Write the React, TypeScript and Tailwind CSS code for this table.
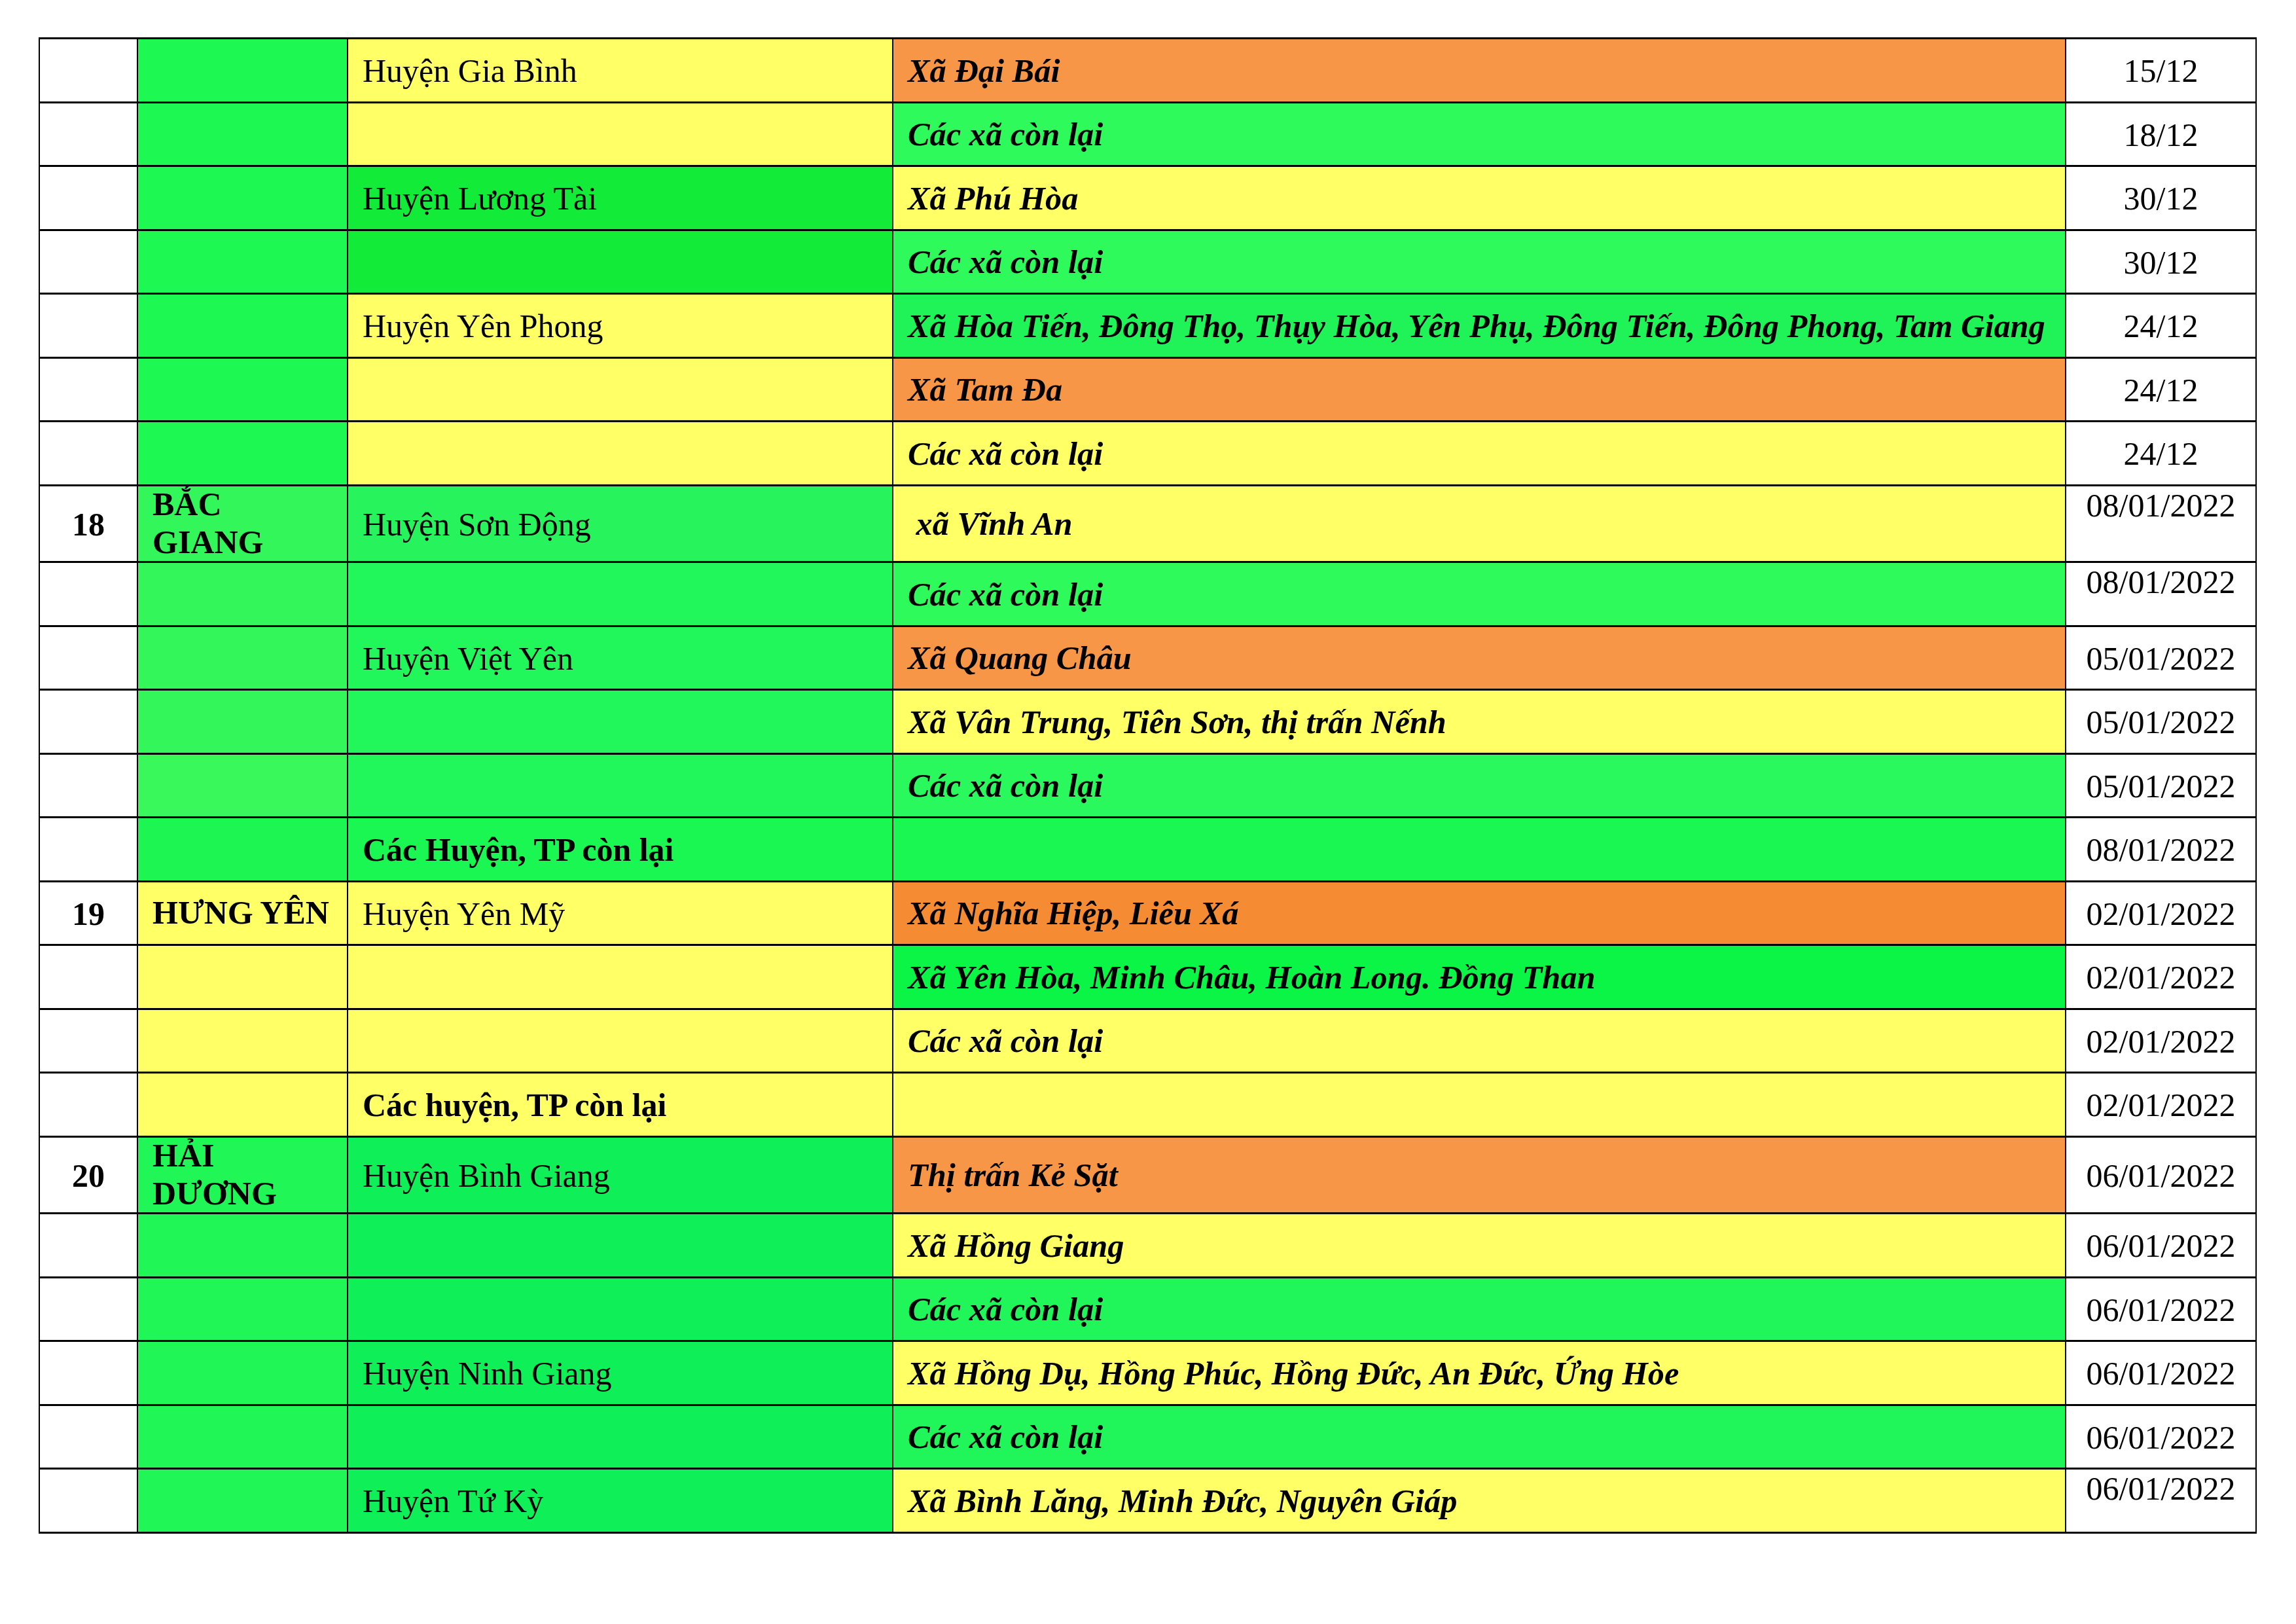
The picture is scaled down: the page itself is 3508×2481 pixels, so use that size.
import React from "react";

type Row = {
  num?: string;
  prov?: React.ReactNode;
  dist?: string;
  distBold?: boolean;
  commune?: string;
  date: string;
  c2: string;
  c3: string;
  c4: string;
  dateTop?: boolean;
  tall?: boolean;
};

const Y = "bg-[#FFFF66]";
const O = "bg-[#F79646]";
const G2a = "bg-[#1DF852]";
const G2b = "bg-[#33F75A]";
const G2d = "bg-[#20F757]";
const G3d = "bg-[#12EC39]";
const G3b = "bg-[#21F75A]";
const G3e = "bg-[#0EEF58]";
const G4a = "bg-[#2FFA5B]";
const G4e = "bg-[#20F55A]";

const rows: Row[] = [
  { dist: "Huyện Gia Bình", commune: "Xã Đại Bái", date: "15/12", c2: G2a, c3: Y, c4: O },
  { commune: "Các xã còn lại", date: "18/12", c2: G2a, c3: Y, c4: G4a },
  { dist: "Huyện Lương Tài", commune: "Xã Phú Hòa", date: "30/12", c2: G2a, c3: G3d, c4: Y },
  { commune: "Các xã còn lại", date: "30/12", c2: G2a, c3: G3d, c4: G4a },
  {
    dist: "Huyện Yên Phong",
    commune: "Xã Hòa Tiến, Đông Thọ, Thụy Hòa, Yên Phụ, Đông Tiến, Đông Phong, Tam Giang",
    date: "24/12",
    c2: G2a,
    c3: Y,
    c4: "bg-[#1FF358]",
  },
  { commune: "Xã Tam Đa", date: "24/12", c2: G2a, c3: Y, c4: O },
  { commune: "Các xã còn lại", date: "24/12", c2: G2a, c3: Y, c4: Y },
  {
    num: "18",
    prov: (
      <>
        BẮC
        <br />
        GIANG
      </>
    ),
    dist: "Huyện Sơn Động",
    commune: " xã Vĩnh An",
    date: "08/01/2022",
    c2: G2b,
    c3: "bg-[#27F35C]",
    c4: Y,
    dateTop: true,
    tall: true,
  },
  { commune: "Các xã còn lại", date: "08/01/2022", c2: G2b, c3: G3b, c4: G4a, dateTop: true },
  { dist: "Huyện Việt Yên", commune: "Xã Quang Châu", date: "05/01/2022", c2: G2b, c3: G3b, c4: O },
  { commune: "Xã Vân Trung, Tiên Sơn, thị trấn Nếnh", date: "05/01/2022", c2: G2b, c3: G3b, c4: Y },
  { commune: "Các xã còn lại", date: "05/01/2022", c2: "bg-[#38F85C]", c3: G3b, c4: "bg-[#2AF95D]" },
  {
    dist: "Các Huyện, TP còn lại",
    distBold: true,
    date: "08/01/2022",
    c2: "bg-[#1DF652]",
    c3: "bg-[#1AF652]",
    c4: "bg-[#1AF652]",
  },
  {
    num: "19",
    prov: "HƯNG YÊN",
    dist: "Huyện Yên Mỹ",
    commune: "Xã Nghĩa Hiệp, Liêu Xá",
    date: "02/01/2022",
    c2: Y,
    c3: Y,
    c4: "bg-[#F58B33]",
  },
  {
    commune: "Xã Yên Hòa, Minh Châu, Hoàn Long. Đồng Than",
    date: "02/01/2022",
    c2: Y,
    c3: Y,
    c4: "bg-[#0AF545]",
  },
  { commune: "Các xã còn lại", date: "02/01/2022", c2: Y, c3: Y, c4: Y },
  { dist: "Các huyện, TP còn lại", distBold: true, date: "02/01/2022", c2: Y, c3: Y, c4: Y },
  {
    num: "20",
    prov: (
      <>
        HẢI
        <br />
        DƯƠNG
      </>
    ),
    dist: "Huyện Bình Giang",
    commune: "Thị trấn Kẻ Sặt",
    date: "06/01/2022",
    c2: G2d,
    c3: G3e,
    c4: O,
    tall: true,
  },
  { commune: "Xã Hồng Giang", date: "06/01/2022", c2: G2d, c3: G3e, c4: Y },
  { commune: "Các xã còn lại", date: "06/01/2022", c2: G2d, c3: G3e, c4: G4e },
  {
    dist: "Huyện Ninh Giang",
    commune: "Xã Hồng Dụ, Hồng Phúc, Hồng Đức, An Đức, Ứng Hòe",
    date: "06/01/2022",
    c2: G2d,
    c3: G3e,
    c4: Y,
  },
  { commune: "Các xã còn lại", date: "06/01/2022", c2: G2d, c3: G3e, c4: G4e },
  {
    dist: "Huyện Tứ Kỳ",
    commune: "Xã Bình Lăng, Minh Đức, Nguyên Giáp",
    date: "06/01/2022",
    c2: G2d,
    c3: G3e,
    c4: Y,
    dateTop: true,
  },
];

export default function App() {
  return (
    <div className="min-h-screen bg-white pt-[57px] pl-[59px] font-['Liberation_Serif','Times_New_Roman',serif] text-[50px] leading-[1.15] text-black">
      <div className="grid w-[3389px] grid-cols-[148px_319px_831px_1790px_289px] gap-x-[2px] gap-y-[3px] bg-black px-[2px] py-[3px]">
        {rows.map((r, i) => {
          const h = r.tall ? "h-[114.5px]" : "h-[94.5px]";
          return (
            <React.Fragment key={i}>
              <div className={`${h} flex items-center justify-center bg-white pt-[3px] font-bold whitespace-nowrap`}>
                {r.num ?? ""}
              </div>
              <div className={`${h} ${r.c2} flex items-center px-[22px] font-bold whitespace-nowrap`}>
                <div>{r.prov ?? ""}</div>
              </div>
              <div
                className={`${h} ${r.c3} flex items-center px-[22px] pt-[3px] whitespace-nowrap ${
                  r.distBold ? "font-bold" : ""
                }`}
              >
                {r.dist ?? ""}
              </div>
              <div
                className={`${h} ${r.c4} flex items-center px-[22px] pt-[3px] text-[50.4px] font-bold italic whitespace-pre`}
              >
                {r.commune ?? ""}
              </div>
              <div
                className={`${h} flex justify-center bg-white whitespace-nowrap ${
                  r.dateTop ? "items-start pt-[1px]" : "items-center pt-[3px]"
                }`}
              >
                {r.date}
              </div>
            </React.Fragment>
          );
        })}
      </div>
    </div>
  );
}
